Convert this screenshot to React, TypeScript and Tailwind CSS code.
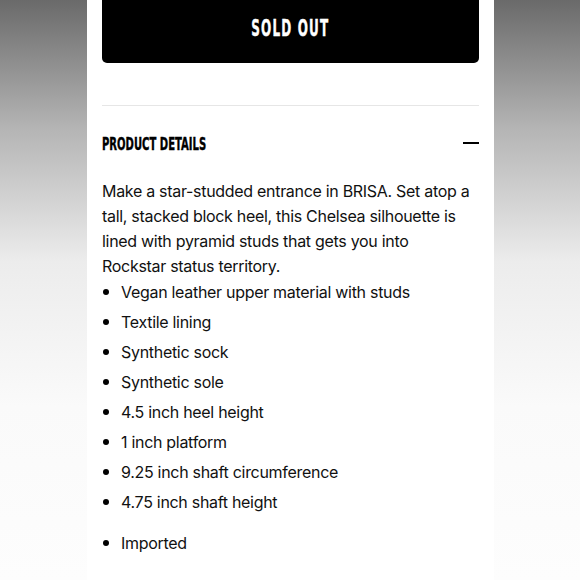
export default function App() {
	const features = [
		"Vegan leather upper material with studs",
		"Textile lining",
		"Synthetic sock",
		"Synthetic sole",
		"4.5 inch heel height",
		"1 inch platform",
		"9.25 inch shaft circumference",
		"4.75 inch shaft height",
	];

	return (
		<div className="w-[580px] h-[580px] overflow-hidden flex pl-[87px] bg-[linear-gradient(180deg,#6a6a6a_0%,#b4b4b4_22%,#ececec_45%,#fafafa_70%,#fdfdfd_100%)]">
			<div className="w-[407px] h-full bg-white px-[15px] font-['Inter',sans-serif] text-[#111]">
				{/* Sold out button */}
				<div className="h-[63px] bg-black rounded-b-[5px] flex items-center justify-center pb-[6px]">
					<span className="inline-block text-white font-bold text-[23px] tracking-[2px] font-['DejaVu_Sans_Condensed',sans-serif] scale-x-[0.58] [-webkit-text-stroke:0.4px_white]">
						SOLD OUT
					</span>
				</div>

				<div className="mt-[42px] border-t border-[#e6e6e6]"></div>

				{/* Product details header */}
				<div className="mt-[26px] flex items-center justify-between h-[24px]">
					<span className="inline-block origin-left text-black font-bold text-[18px] leading-none font-['DejaVu_Sans_Condensed',sans-serif] scale-x-[0.62] [-webkit-text-stroke:0.4px_black]">
						PRODUCT DETAILS
					</span>
					<span className="w-[16px] h-[2px] bg-black mb-[3px]"></span>
				</div>

				{/* Description */}
				<p className="mt-[23px] text-[16px] leading-[25px] tracking-[-0.3px]">
					Make a star-studded entrance in BRISA. Set atop a
					<br />
					tall, stacked block heel, this Chelsea silhouette is
					<br />
					lined with pyramid studs that gets you into
					<br />
					Rockstar status territory.
				</p>

				<ul className="-mt-[2px] tracking-[-0.3px]">
					{features.map((f) => (
						<li key={f} className="flex items-center h-[30px] text-[16px]">
							<span className="w-[6px] h-[6px] rounded-full bg-black ml-[1px] mr-[12px]"></span>
							{f}
						</li>
					))}
					<li className="flex items-center h-[30px] text-[16px] mt-[11px]">
						<span className="w-[6px] h-[6px] rounded-full bg-black ml-[1px] mr-[12px]"></span>
						Imported
					</li>
				</ul>
			</div>
		</div>
	);
}
